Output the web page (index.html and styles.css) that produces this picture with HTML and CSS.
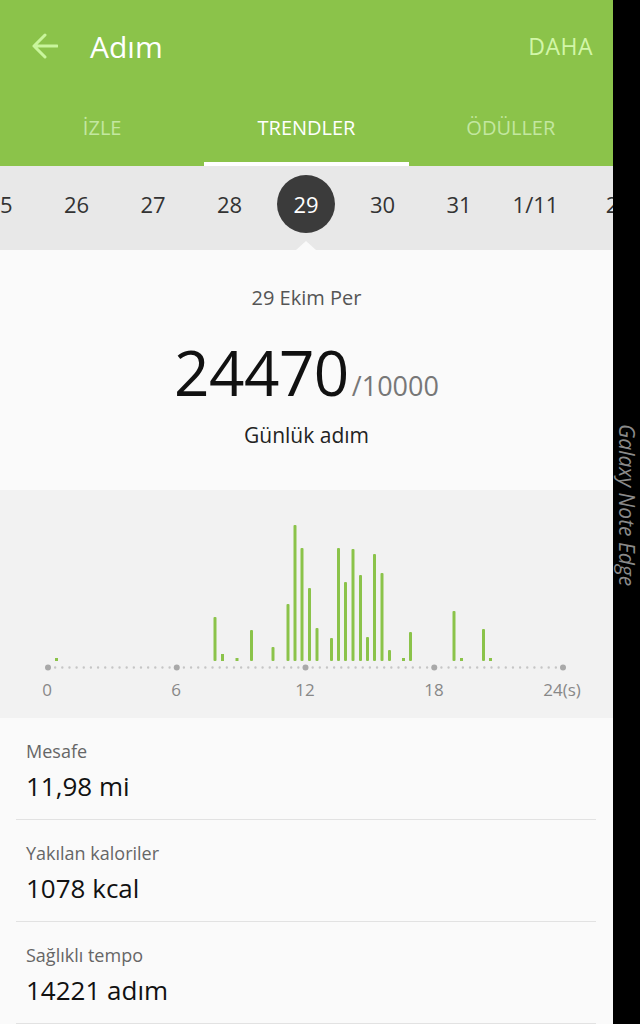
FILE: index.html
```html
<!DOCTYPE html>
<html lang="tr">
<head>
<meta charset="utf-8">
<title>Adım</title>
<link rel="stylesheet" href="styles.css">
</head>
<body>
<div class="device">
  <div class="app">
    <header class="header">
      <div class="titlebar">
        <svg class="back" width="26" height="26" viewBox="0 0 26 26"><path d="M25 13H2M13 2L2 13L13 24" fill="none" stroke="#c9f59c" stroke-width="3" stroke-linecap="round" stroke-linejoin="round"/></svg>
        <h1 class="title">Adım</h1>
        <span class="more">DAHA</span>
      </div>
      <nav class="tabs">
        <div class="tab">İZLE</div>
        <div class="tab active">TRENDLER</div>
        <div class="tab">ÖDÜLLER</div>
      </nav>
    </header>

    <div class="dates">
      <div class="date">25</div>
      <div class="date">26</div>
      <div class="date">27</div>
      <div class="date">28</div>
      <div class="date"><span class="sel">29</span></div>
      <div class="date">30</div>
      <div class="date">31</div>
      <div class="date">1/11</div>
      <div class="date">2</div>
      <span class="pointer"></span>
    </div>

    <section class="summary">
      <div class="day">29 Ekim Per</div>
      <div class="count"><span class="big">24470</span><span class="goal">/10000</span></div>
      <div class="caption">Günlük adım</div>
    </section>

    <section class="chart">
      <svg width="612" height="228" viewBox="0 0 612 228">
        <g fill="#8bc34a">
          <rect x="55" y="168" width="3" height="3"/>
          <rect x="213.5" y="127" width="3" height="44" rx="1"/>
          <rect x="221" y="164" width="3" height="7"/>
          <rect x="235.5" y="168" width="3" height="3"/>
          <rect x="250" y="140" width="3" height="31" rx="1"/>
          <rect x="271.5" y="157" width="3" height="14" rx="1"/>
          <rect x="286.5" y="114" width="3" height="57" rx="1"/>
          <rect x="293.5" y="35" width="3" height="136" rx="1"/>
          <rect x="300.5" y="58" width="3" height="113" rx="1"/>
          <rect x="308" y="98" width="3" height="73" rx="1"/>
          <rect x="315.5" y="138" width="3" height="33" rx="1"/>
          <rect x="330" y="148" width="3" height="23" rx="1"/>
          <rect x="337" y="58" width="3" height="113" rx="1"/>
          <rect x="344" y="92" width="3" height="79" rx="1"/>
          <rect x="351.5" y="59" width="3" height="112" rx="1"/>
          <rect x="359" y="85" width="3" height="86" rx="1"/>
          <rect x="366" y="147" width="3" height="24" rx="1"/>
          <rect x="373" y="64" width="3" height="107" rx="1"/>
          <rect x="380.5" y="83" width="3" height="88" rx="1"/>
          <rect x="388" y="160" width="3" height="11" rx="1"/>
          <rect x="402" y="168" width="3" height="3"/>
          <rect x="409" y="142" width="3" height="29" rx="1"/>
          <rect x="452.5" y="121" width="3" height="50" rx="1"/>
          <rect x="460" y="168" width="3" height="3"/>
          <rect x="482" y="139" width="3" height="32" rx="1"/>
          <rect x="489" y="168" width="3" height="3"/>
        </g>
        <line x1="48" y1="177.5" x2="563" y2="177.5" stroke="#c6c6c6" stroke-width="2.4" stroke-linecap="round" stroke-dasharray="0 7.153"/>
        <g fill="#a9a9a9">
          <circle cx="48" cy="177.5" r="3"/>
          <circle cx="176.75" cy="177.5" r="3"/>
          <circle cx="305.5" cy="177.5" r="3"/>
          <circle cx="434.25" cy="177.5" r="3"/>
          <circle cx="563" cy="177.5" r="3"/>
        </g>
        <g class="axis" text-anchor="middle">
          <text x="47" y="206">0</text>
          <text x="176" y="206">6</text>
          <text x="305" y="206">12</text>
          <text x="434" y="206">18</text>
          <text x="562" y="206">24(s)</text>
        </g>
      </svg>
    </section>

    <ul class="stats">
      <li class="stat">
        <div class="label">Mesafe</div>
        <div class="value">11,98 mi</div>
      </li>
      <li class="stat">
        <div class="label">Yakılan kaloriler</div>
        <div class="value">1078 kcal</div>
      </li>
      <li class="stat">
        <div class="label">Sağlıklı tempo</div>
        <div class="value">14221 adım</div>
      </li>
    </ul>
  </div>
  <aside class="edge"><span class="edge-text">Galaxy Note Edge</span></aside>
</div>
</body>
</html>
```

FILE: styles.css
```css
* { box-sizing: border-box; }
html, body { margin: 0; padding: 0; }
body {
  width: 640px;
  height: 1024px;
  overflow: hidden;
  background: #000;
  font-family: "Open Sans", "Noto Sans", "Liberation Sans", sans-serif;
}
.device {
  display: flex;
  width: 640px;
  height: 1024px;
}
.app {
  width: 613px;
  height: 1024px;
  background: #fafafa;
  display: flex;
  flex-direction: column;
  overflow: hidden;
}
.header {
  background: #8bc34a;
  height: 166px;
  display: flex;
  flex-direction: column;
}
.titlebar {
  height: 100px;
  display: flex;
  align-items: center;
  padding: 0 20px 8px 32px;
}
.back { flex: none; }
.title {
  margin: 0 0 0 32px;
  font-size: 30px;
  font-weight: 400;
  color: #fff;
  flex: 1;
}
.more {
  font-size: 23px;
  color: #d2f6a8;
  letter-spacing: 0.5px;
}
.tabs {
  display: flex;
  height: 66px;
}
.tab {
  flex: 1;
  text-align: center;
  padding-top: 15px;
  line-height: 26px;
  font-size: 20px;
  color: #c3e7a0;
  border-bottom: 4px solid transparent;
}
.tab.active {
  color: #fff;
  border-bottom-color: #fff;
}
.dates {
  position: relative;
  height: 84px;
  background: #e8e8e8;
  display: flex;
  align-items: center;
  margin-left: -38.25px;
  width: 690px;
  padding-bottom: 8px;
}
.date {
  flex: none;
  width: 76.5px;
  text-align: center;
  font-size: 22px;
  color: #333;
  display: flex;
  justify-content: center;
  align-items: center;
}
.sel {
  width: 58px;
  height: 58px;
  border-radius: 50%;
  background: #3b3b3b;
  color: #fff;
  display: flex;
  align-items: center;
  justify-content: center;
}
.pointer {
  position: absolute;
  left: 334.25px;
  bottom: 0;
  width: 0;
  height: 0;
  border-left: 10px solid transparent;
  border-right: 10px solid transparent;
  border-bottom: 9px solid #fafafa;
}
.summary {
  height: 240px;
  text-align: center;
  padding-top: 36px;
}
.day {
  font-size: 20px;
  line-height: 24px;
  color: #555;
}
.count {
  margin-top: 26px;
  line-height: 72px;
  height: 72px;
}
.big {
  font-size: 62px;
  color: #111;
  letter-spacing: -0.5px;
}
.goal {
  font-size: 27px;
  color: #777;
  margin-left: 3px;
}
.caption {
  margin-top: 14px;
  font-size: 21px;
  line-height: 26px;
  color: #222;
}
.chart {
  height: 228px;
  background: #f2f2f2;
}
.chart svg { display: block; }
.axis {
  font-family: "Open Sans", "Noto Sans", sans-serif;
  font-size: 17px;
  fill: #888;
}
.stats {
  list-style: none;
  margin: 0 17px 0 16px;
  padding: 0;
}
.stat {
  height: 102px;
  padding: 22px 0 0 10px;
  border-bottom: 1px solid #e2e2e2;
}
.label {
  font-size: 18px;
  line-height: 22px;
  color: #666;
}
.value {
  margin-top: 7px;
  font-size: 26px;
  line-height: 34px;
  color: #111;
}
.edge {
  width: 27px;
  height: 1024px;
  background: #000;
  display: flex;
  justify-content: center;
  padding-top: 424px;
}
.edge-text {
  writing-mode: vertical-rl;
  font-size: 21px;
  font-style: italic;
  color: #8a8a8a;
  line-height: 27px;
}
```
